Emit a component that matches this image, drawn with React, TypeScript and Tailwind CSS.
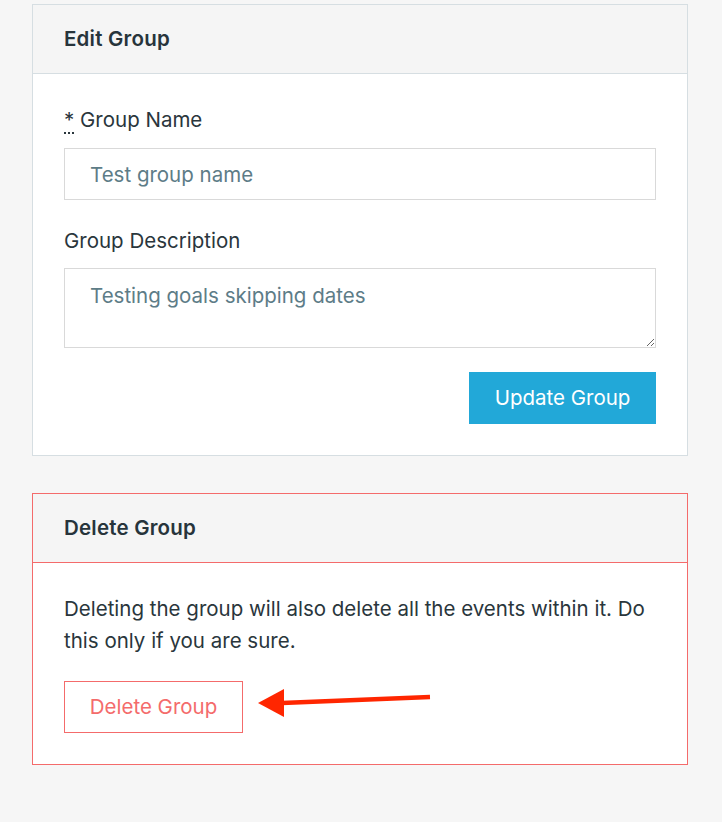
import React from "react";

// ─── Panel ────────────────────────────────────────────────────────────────────

function Panel({
  title,
  danger,
  children,
}: {
  title: string;
  danger?: boolean;
  children: React.ReactNode;
}) {
  const border = danger ? "border-[#f46b6b]" : "border-[#d6dee2]";
  return (
    <section className={`border bg-white ${border}`}>
      <header className={`h-[69px] flex items-center px-[31px] bg-[#f5f5f5] border-b ${border}`}>
        <h2 className="text-[20.5px] font-semibold text-[#27343b] tracking-[0.01em]">{title}</h2>
      </header>
      <div className="px-[31px] pb-[31px]">{children}</div>
    </section>
  );
}

// ─── App ──────────────────────────────────────────────────────────────────────

export default function App() {
  return (
    <div
      className="relative min-h-[822px] w-[722px] bg-[#f6f6f6] pl-[32px] pr-[34px] pt-[4px] text-[20.5px] text-[#2a363c]"
      style={{ fontFamily: "Inter, 'Noto Sans', sans-serif" }}
    >
      <Panel title="Edit Group">
        <label className="block pt-[32px] leading-[28px]">
          <abbr className="no-underline border-b-2 border-dotted border-[#2a363c]" title="required">
            *
          </abbr>{" "}
          Group Name
        </label>
        <input
          className="mt-[14px] block w-full h-[52px] border border-[#d9d9d9] px-[25px] text-[20.5px] text-[#5d7c87] placeholder:text-[#5d7c87] outline-none"
          placeholder="Test group name"
        />
        <label className="block mt-[27px] leading-[28px]">Group Description</label>
        <textarea
          className="mt-[13px] block w-full h-[80px] border border-[#d9d9d9] px-[25px] py-[13px] text-[20.5px] leading-[28px] text-[#5d7c87] placeholder:text-[#5d7c87] outline-none"
          placeholder="Testing goals skipping dates"
        />
        <div className="flex justify-end mt-[24px]">
          <button className="h-[52px] w-[187px] bg-[#22a8d8] text-white text-[20.5px]">Update Group</button>
        </div>
      </Panel>

      <div className="mt-[37px]">
        <Panel title="Delete Group" danger>
          <p className="pt-[30px] leading-[32px]">
            Deleting the group will also delete all the events within it. Do this only if you are sure.
          </p>
          <button className="mt-[24px] h-[52px] w-[179px] border border-[#f46b6b] bg-white text-[20.5px] text-[#f46b6b]">
            Delete Group
          </button>
        </Panel>
      </div>

      {/* annotation arrow */}
      <svg className="absolute left-0 top-0 pointer-events-none" width="722" height="822">
        <line x1="430" y1="697" x2="282" y2="703" stroke="#ff2600" strokeWidth="4.5" />
        <polygon points="258,703 284,689 284,717" fill="#ff2600" />
      </svg>
    </div>
  );
}
